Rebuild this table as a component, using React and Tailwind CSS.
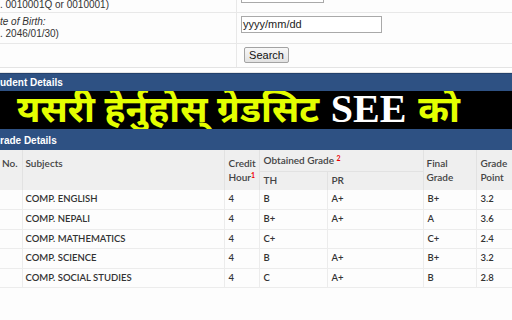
export default function App() {
  const rows = [
    ["COMP. ENGLISH", "4", "B", "A+", "B+", "3.2"],
    ["COMP. NEPALI", "4", "B+", "A+", "A", "3.6"],
    ["COMP. MATHEMATICS", "4", "C+", "", "C+", "2.4"],
    ["COMP. SCIENCE", "4", "B", "A+", "B+", "3.2"],
    ["COMP. SOCIAL STUDIES", "4", "C", "A+", "B", "2.8"],
  ];

  return (
    <div className="w-[512px] h-[320px] overflow-hidden bg-[#fdfdfd] font-['Liberation_Sans',Arial,sans-serif]">
      {/* search form */}
      <div className="text-[10px] text-[#333]">
        <div className="flex h-[13px] border-b border-[#e8e8e8]">
          <div className="w-[237px] border-r border-[#e8e8e8] flex items-start">
            <span className="-mt-[1px] leading-[12px]">. 0010001Q or 0010001)</span>
          </div>
          <div className="pl-[4px]">
            <div className="w-[83px] h-[3px] border-x border-b border-[#a9a9a9] bg-white" />
          </div>
        </div>
        <div className="flex h-[31px] border-b border-[#e8e8e8]">
          <div className="w-[237px] border-r border-[#e8e8e8] pt-[3px] leading-[12px]">
            <div className="italic">te of Birth:</div>
            <div>. 2046/01/30)</div>
          </div>
          <div className="pl-[4px] pt-[3px]">
            <div className="w-[141px] h-[17px] border border-[#a9a9a9] bg-white text-[11px] leading-[15px] pl-[1px] text-[#222]">
              yyyy/mm/dd
            </div>
          </div>
        </div>
        <div className="flex h-[24px] border-b border-[#e4e4e4]">
          <div className="w-[237px] border-r border-[#e8e8e8]" />
          <div className="pl-[7px] pt-[3px]">
            <div className="w-[45px] h-[16px] rounded-[2px] border border-[#a3a3a3] bg-gradient-to-b from-[#f8f8f8] to-[#e2e2e2] text-[11px] leading-[14px] text-center text-[#111]">
              Search
            </div>
          </div>
        </div>
        <div className="h-[5px] bg-white border-b border-[#e6e6e6]" />
      </div>

      {/* student details bar */}
      <div className="h-[18px] bg-[#2e5183] border-t border-[#24416c] flex items-center">
        <span className="text-white text-[10px] font-bold leading-none">udent Details</span>
      </div>

      {/* banner */}
      <div className="h-[38px] bg-black flex items-center pl-[17px] overflow-hidden">
        <span className="text-[#e4ff00] text-[37px] font-bold leading-none font-['Noto_Sans_Devanagari','Noto_Sans',sans-serif] whitespace-nowrap">
          यसरी हेर्नुहोस् ग्रेडसिट{" "}
          <span className="text-white font-['Liberation_Serif',serif] text-[40px] ml-[2px]">SEE</span>
          <span className="ml-[12px]">को</span>
        </span>
      </div>

      {/* grade details bar */}
      <div className="h-[21px] bg-[#2e5183] flex items-end pb-[4px]">
        <span className="text-white text-[10px] font-bold leading-none">rade Details</span>
      </div>

      {/* grade table */}
      <table className="table-fixed w-[512px] border-collapse text-[10px] text-[#333] font-['Lato',sans-serif]">
        <colgroup>
          <col className="w-[22px]" />
          <col className="w-[202px]" />
          <col className="w-[35px]" />
          <col className="w-[68px]" />
          <col className="w-[96px]" />
          <col className="w-[53px]" />
          <col className="w-[36px]" />
        </colgroup>
        <thead className="bg-[#efefef] text-[#444]">
          <tr className="h-[21px]">
            <th rowSpan={2} className="align-top text-left font-semibold pt-[6px] pl-[2px] border-r border-[#e2e2e2]">No.</th>
            <th rowSpan={2} className="align-top text-left font-semibold pt-[6px] pl-[3px] border-r border-[#e2e2e2]">Subjects</th>
            <th rowSpan={2} className="align-top text-left font-semibold pt-[6px] pl-[4px] leading-[14px] border-r border-[#e2e2e2]">
              Credit Hour<sup className="text-[#e00] text-[7px] font-bold">1</sup>
            </th>
            <th colSpan={2} className="text-left font-semibold pl-[4px] pt-[1px] border-b border-[#e2e2e2]">
              Obtained Grade <sup className="text-[#e00] text-[7px] font-bold">2</sup>
            </th>
            <th rowSpan={2} className="align-top text-left font-semibold pt-[6px] pl-[3px] leading-[14px] border-x border-[#e2e2e2]">Final Grade</th>
            <th rowSpan={2} className="align-top text-left font-semibold pt-[6px] pl-[4px] leading-[14px]">Grade Point</th>
          </tr>
          <tr className="h-[19px]">
            <th className="text-left font-semibold pl-[4px] border-r border-[#e2e2e2]">TH</th>
            <th className="text-left font-semibold pl-[4px]">PR</th>
          </tr>
        </thead>
        <tbody>
          {rows.map((r) => (
            <tr key={r[0]} className="h-[19.5px] border-b border-[#ececec] text-[9.5px]">
              <td className="border-r border-[#ececec]" />
              <td className="pl-[3px] font-semibold border-r border-[#ececec]">{r[0]}</td>
              {r.slice(1).map((c, i) => (
                <td key={i} className="pl-[4px] font-semibold border-r border-[#ececec]">{c}</td>
              ))}
            </tr>
          ))}
        </tbody>
      </table>
    </div>
  );
}
